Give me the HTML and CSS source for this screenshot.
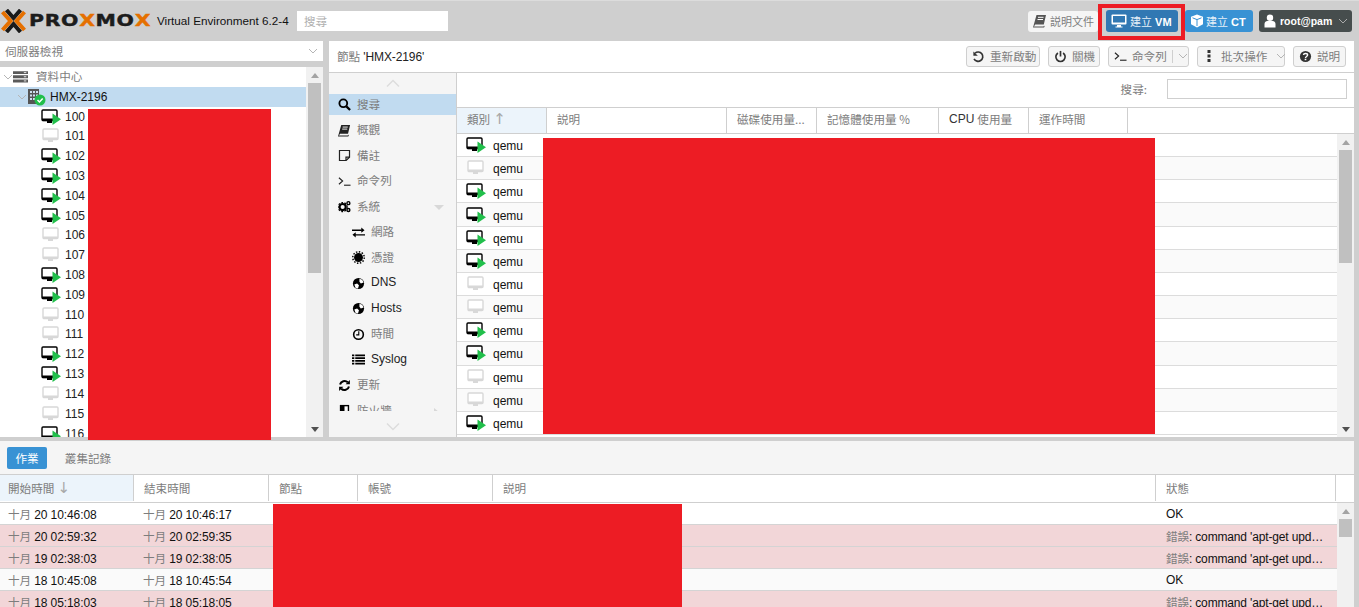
FILE: index.html
```html
<!DOCTYPE html>
<html lang="zh-Hant">
<head>
<meta charset="utf-8">
<title>HMX-2196 - Proxmox Virtual Environment</title>
<link rel="stylesheet" href="styles.css">
</head>
<body>
<svg class="defs" aria-hidden="true">
  <symbol id="vm-on" viewBox="0 0 20 16"><rect x="1" y="1" width="15" height="10.5" rx="1" fill="#fff" stroke="#000" stroke-width="1.4"/><rect x="1" y="9.5" width="15" height="2.6" fill="#000"/><rect x="6" y="12" width="5" height="2" fill="#000"/><path d="M11.500 4.500l8.500 5.750-8.500 5.750z" fill="#21bf4b"/></symbol>
  <symbol id="vm-off" viewBox="0 0 20 16"><rect x="2" y="1" width="15" height="10.5" rx="1" fill="#fff" stroke="#d8d8d8" stroke-width="1.4"/><rect x="2" y="9.5" width="15" height="2.4" fill="#d8d8d8"/><rect x="7" y="12" width="5" height="2" fill="#d8d8d8"/></symbol>
  <symbol id="i-search" viewBox="0 0 14 14"><circle cx="5.7" cy="5.7" r="4.2" fill="none" stroke="#000" stroke-width="2"/><path d="M9 9l4 4" stroke="#000" stroke-width="2.4"/></symbol>
  <symbol id="i-book" viewBox="0 0 14 14"><path d="M3.500 1H13l-2.200 9.500H2.200L1 12.500h9.500l.4-.8.8.2-.6 1.600H0L3.500 1z" fill="currentColor"/><path d="M5 3.300h5.500M4.500 5.500H10" stroke="#fff" stroke-width="1"/></symbol>
  <symbol id="i-note" viewBox="0 0 14 14"><path d="M1.600 1.600h10.800v7.200l-3.600 3.600H1.600z" fill="none" stroke="currentColor" stroke-width="1.300"/><path d="M8.600 12.200V8.800h3.700" fill="none" stroke="currentColor" stroke-width="1.300"/></symbol>
  <symbol id="i-term" viewBox="0 0 14 14"><path d="M1 3l4 3.500L1 10" fill="none" stroke="currentColor" stroke-width="1.200"/><path d="M6.500 11h7" stroke="currentColor" stroke-width="1.200"/></symbol>
  <symbol id="i-cogs" viewBox="0 0 14 14"><circle cx="5" cy="7.600" r="3.300" fill="none" stroke="#000" stroke-width="2.200"/><circle cx="5" cy="7.600" r="4.900" fill="none" stroke="#000" stroke-width="1.200" stroke-dasharray="2 1.500"/><circle cx="11.200" cy="3.400" r="1.600" fill="none" stroke="#000" stroke-width="1.500"/><circle cx="11.200" cy="10.800" r="1.600" fill="none" stroke="#000" stroke-width="1.500"/></symbol>
  <symbol id="i-swap" viewBox="0 0 14 14"><path d="M0 4.500h10.500M3 9.500h11" stroke="#000" stroke-width="1.500"/><path d="M10 1.600l3.500 2.900-3.500 2.900zM4 6.600L.5 9.500 4 12.400z" fill="#000"/></symbol>
  <symbol id="i-cert" viewBox="0 0 14 14"><circle cx="7" cy="7" r="4.800" fill="#000"/><circle cx="7" cy="7" r="6.200" fill="none" stroke="#000" stroke-width="1.600" stroke-dasharray="1.600 1.600"/></symbol>
  <symbol id="i-globe" viewBox="0 0 14 14"><circle cx="7" cy="7" r="6" fill="#000"/><path d="M8 2l3 1 1.500 3-3 1-1.500-2zM2.500 8l3-1 2 2-1 3.500L4 12z" fill="#fff"/></symbol>
  <symbol id="i-clock" viewBox="0 0 14 14"><circle cx="7" cy="7" r="5.200" fill="none" stroke="#000" stroke-width="1.700"/><path d="M7.300 3.600V7.400H4.500" fill="none" stroke="#000" stroke-width="1.200"/></symbol>
  <symbol id="i-list" viewBox="0 0 14 14"><path d="M0 2.500h2.500M0 5.500h2.500M0 8.500h2.500M0 11.500h2.500M3.500 2.500H14M3.500 5.500H14M3.500 8.500H14M3.500 11.500H14" stroke="#000" stroke-width="2"/></symbol>
  <symbol id="i-sync" viewBox="0 0 14 14"><path d="M2.200 6A5 5 0 0 1 10.500 3.500" fill="none" stroke="#000" stroke-width="2.200"/><path d="M11.800 8A5 5 0 0 1 3.500 10.500" fill="none" stroke="#000" stroke-width="2.200"/><path d="M12.800 1v4.600H8.200zM1.200 13V8.400h4.600z" fill="#000"/></symbol>
  <symbol id="i-shield" viewBox="0 0 14 14"><path d="M2 1h10v12H2z" fill="#000"/><path d="M7 2.500h3.500v5H7z" fill="#fff"/></symbol>
  <symbol id="i-desktop" viewBox="0 0 16 14"><rect x=".5" y=".5" width="15" height="10" rx="1" fill="#fff"/><rect x="2" y="2" width="12" height="6.500" fill="#3178b3"/><path d="M6 11h4v1.500h1.500V13.500h-7V12.500H6z" fill="#fff"/></symbol>
  <symbol id="i-cube" viewBox="0 0 14 14"><path d="M7 .5l6 2.300v7.400L7 13.500 1 10.200V2.800z" fill="#fff"/><path d="M2.500 3.800L7 5.600l4.500-1.800M7 5.600v6.400" fill="none" stroke="#3892d4" stroke-width="1"/></symbol>
  <symbol id="i-user" viewBox="0 0 12 14"><circle cx="6" cy="3.800" r="3.200" fill="#fff"/><path d="M.5 13.500V10c0-2 1.500-3 2.800-3h5.400c1.300 0 2.800 1 2.800 3v3.500z" fill="#fff"/></symbol>
  <symbol id="i-undo" viewBox="0 0 14 14"><path d="M3.200 3.500A5 5 0 1 1 2.200 9.500" fill="none" stroke="#333" stroke-width="1.800"/><path d="M1.500 1.500v4.800h4.800z" fill="#333"/></symbol>
  <symbol id="i-power" viewBox="0 0 14 14"><path d="M4.200 3.200a5 5 0 1 0 5.600 0" fill="none" stroke="#333" stroke-width="1.800"/><path d="M7 1v6" stroke="#333" stroke-width="1.800"/></symbol>
  <symbol id="i-dots" viewBox="0 0 6 14"><path d="M1.500 1h3v3h-3zM1.500 5.500h3v3h-3zM1.500 10h3v3h-3z" fill="#333"/></symbol>
  <symbol id="i-help" viewBox="0 0 14 14"><circle cx="7" cy="7" r="6" fill="#333"/><path d="M4.800 5.400C5 3.200 9.300 3.200 9.300 5.500c0 1.500-2.300 1.500-2.300 3" fill="none" stroke="#fff" stroke-width="1.500"/><path d="M6.100 9.400h1.800v1.600H6.100z" fill="#fff"/></symbol>
  <symbol id="i-server" viewBox="0 0 18 14"><path d="M0 0h18v3.500H0zM0 5h18v3.500H0zM0 10h18v3.500H0z" fill="#5a5a5a"/><path d="M13 1.700h3M13 6.700h3M13 11.700h3" stroke="#fff" stroke-width="1"/></symbol>
  <symbol id="i-node" viewBox="0 0 20 18"><path d="M1 1h11v15H1z" fill="#555"/><path d="M3 3h2v2H3zM6 3h2v2H6zM9 3h2v2H9zM3 6.500h2v2H3zM6 6.500h2v2H6zM9 6.500h2v2H9zM3 10h2v2H3zM6 10h2v2H6z" fill="#cfe0ee"/><circle cx="13" cy="12" r="5.500" fill="#21bf4b"/><path d="M10.500 12l2 2 3.200-3.500" fill="none" stroke="#fff" stroke-width="1.500"/></symbol>
  <symbol id="chev" viewBox="0 0 10 6"><path d="M1 1l4 4 4-4" fill="none" stroke="currentColor" stroke-width="1"/></symbol>
</svg>

<div class="app">
  <header class="top">
    <div class="logo">
      <svg class="logo-x" viewBox="0 0 24 24"><path d="M5 1l7 8 7-8M5 23l7-8 7 8" fill="none" stroke="#1a1a1a" stroke-width="4"/><path d="M1 3l8 9-8 9M23 3l-8 9 8 9" fill="none" stroke="#e57000" stroke-width="4"/></svg>
      <span class="logo-text">PRO<b>X</b>MO<b>X</b></span>
    </div>
    <span class="version">Virtual Environment 6.2-4</span>
    <div class="top-search">搜尋</div>
    <div class="spacer"></div>
    <div class="tbtn doc"><svg class="ic14"><use href="#i-book"/></svg><span class="c">説明文件</span></div>
    <div class="vm-wrap"><div class="tbtn blue-d"><svg class="ic-desk"><use href="#i-desktop"/></svg><span><span class="w">建立</span> VM</span></div></div>
    <div class="tbtn blue"><svg class="ic14"><use href="#i-cube"/></svg><span><span class="w">建立</span> CT</span></div>
    <div class="tbtn user"><svg class="ic-user"><use href="#i-user"/></svg><span>root@pam</span><svg class="chev-s"><use href="#chev"/></svg></div>
  </header>

  <div class="mid">
    <aside class="left">
      <div class="viewsel"><span class="c">伺服器檢視</span><svg class="chev-s"><use href="#chev"/></svg></div>
      <div class="tree-box">
        <div class="tree">
          <div class="t-row t-dc"><svg class="chev-s"><use href="#chev"/></svg><svg class="ic-srv"><use href="#i-server"/></svg><span class="c">資料中心</span></div>
          <div class="t-row t-node"><svg class="chev-s"><use href="#chev"/></svg><svg class="ic-node"><use href="#i-node"/></svg><span>HMX-2196</span></div>
          <div class="t-row t-vm"><svg class="ic-vm"><use href="#vm-on"/></svg>100</div>
          <div class="t-row t-vm"><svg class="ic-vm"><use href="#vm-off"/></svg>101</div>
          <div class="t-row t-vm"><svg class="ic-vm"><use href="#vm-on"/></svg>102</div>
          <div class="t-row t-vm"><svg class="ic-vm"><use href="#vm-on"/></svg>103</div>
          <div class="t-row t-vm"><svg class="ic-vm"><use href="#vm-on"/></svg>104</div>
          <div class="t-row t-vm"><svg class="ic-vm"><use href="#vm-on"/></svg>105</div>
          <div class="t-row t-vm"><svg class="ic-vm"><use href="#vm-off"/></svg>106</div>
          <div class="t-row t-vm"><svg class="ic-vm"><use href="#vm-off"/></svg>107</div>
          <div class="t-row t-vm"><svg class="ic-vm"><use href="#vm-on"/></svg>108</div>
          <div class="t-row t-vm"><svg class="ic-vm"><use href="#vm-on"/></svg>109</div>
          <div class="t-row t-vm"><svg class="ic-vm"><use href="#vm-off"/></svg>110</div>
          <div class="t-row t-vm"><svg class="ic-vm"><use href="#vm-off"/></svg>111</div>
          <div class="t-row t-vm"><svg class="ic-vm"><use href="#vm-on"/></svg>112</div>
          <div class="t-row t-vm"><svg class="ic-vm"><use href="#vm-on"/></svg>113</div>
          <div class="t-row t-vm"><svg class="ic-vm"><use href="#vm-off"/></svg>114</div>
          <div class="t-row t-vm"><svg class="ic-vm"><use href="#vm-off"/></svg>115</div>
          <div class="t-row t-vm"><svg class="ic-vm"><use href="#vm-on"/></svg>116</div>
        </div>
        <div class="sbar sbar-tree"><i class="up"></i><i class="thumb"></i><span class="fill"></span><i class="down"></i></div>
      </div>
    </aside>

    <main class="main">
      <div class="title">
        <div class="title-text"><span class="c">節點</span> 'HMX-2196'</div>
        <div class="spacer"></div>
        <div class="btn b-restart"><svg class="ic13"><use href="#i-undo"/></svg><span class="c">重新啟動</span></div>
        <div class="btn b-off"><svg class="ic13"><use href="#i-power"/></svg><span class="c">關機</span></div>
        <div class="btn b-cmd"><svg class="ic13"><use href="#i-term"/></svg><span class="c">命令列</span><em class="sep"></em><svg class="chev-s"><use href="#chev"/></svg></div>
        <div class="btn b-bulk"><svg class="ic-dots"><use href="#i-dots"/></svg><span class="c">批次操作</span><svg class="chev-s"><use href="#chev"/></svg></div>
        <div class="btn b-help"><svg class="ic13"><use href="#i-help"/></svg><span class="c">説明</span></div>
      </div>
      <div class="content">
        <nav class="nav">
          <div class="nav-scroll"><svg class="chev-l"><use href="#chev"/></svg></div>
          <div class="n-item sel"><svg class="ic13"><use href="#i-search"/></svg><span class="c">搜尋</span></div>
          <div class="n-item"><svg class="ic13"><use href="#i-book"/></svg><span class="c">概觀</span></div>
          <div class="n-item"><svg class="ic13"><use href="#i-note"/></svg><span class="c">備註</span></div>
          <div class="n-item"><svg class="ic13"><use href="#i-term"/></svg><span class="c">命令列</span></div>
          <div class="n-item"><svg class="ic13"><use href="#i-cogs"/></svg><span class="c">系統</span><i class="tri-d"></i></div>
          <div class="n-item sub"><svg class="ic13"><use href="#i-swap"/></svg><span class="c">網路</span></div>
          <div class="n-item sub"><svg class="ic13"><use href="#i-cert"/></svg><span class="c">憑證</span></div>
          <div class="n-item sub"><svg class="ic13"><use href="#i-globe"/></svg><span>DNS</span></div>
          <div class="n-item sub"><svg class="ic13"><use href="#i-globe"/></svg><span>Hosts</span></div>
          <div class="n-item sub"><svg class="ic13"><use href="#i-clock"/></svg><span class="c">時間</span></div>
          <div class="n-item sub"><svg class="ic13"><use href="#i-list"/></svg><span>Syslog</span></div>
          <div class="n-item"><svg class="ic13"><use href="#i-sync"/></svg><span class="c">更新</span></div>
          <div class="n-item"><svg class="ic13"><use href="#i-shield"/></svg><span class="c">防火牆</span><i class="tri-r"></i></div>
          <div class="nav-scroll nav-scroll-b"><svg class="chev-l"><use href="#chev"/></svg></div>
        </nav>
        <section class="grid">
          <div class="g-search"><span class="c">搜尋:</span><div class="g-input"></div></div>
          <div class="g-head">
            <div class="hc sorted w90"><span class="c">類別</span><span class="arrow">↑</span></div>
            <div class="hc w180"><span class="c">説明</span></div>
            <div class="hc w90"><span class="c">磁碟使用量...</span></div>
            <div class="hc w122"><span class="c">記憶體使用量 %</span></div>
            <div class="hc w90"><span>CPU </span><span class="c">使用量</span></div>
            <div class="hc w99"><span class="c">運作時間</span></div>
          </div>
          <div class="g-body">
            <div class="g-rows">
              <div class="g-row"><svg class="ic-vm"><use href="#vm-on"/></svg><span>qemu</span></div>
              <div class="g-row alt"><svg class="ic-vm"><use href="#vm-off"/></svg><span>qemu</span></div>
              <div class="g-row"><svg class="ic-vm"><use href="#vm-on"/></svg><span>qemu</span></div>
              <div class="g-row alt"><svg class="ic-vm"><use href="#vm-on"/></svg><span>qemu</span></div>
              <div class="g-row"><svg class="ic-vm"><use href="#vm-on"/></svg><span>qemu</span></div>
              <div class="g-row alt"><svg class="ic-vm"><use href="#vm-on"/></svg><span>qemu</span></div>
              <div class="g-row"><svg class="ic-vm"><use href="#vm-off"/></svg><span>qemu</span></div>
              <div class="g-row alt"><svg class="ic-vm"><use href="#vm-off"/></svg><span>qemu</span></div>
              <div class="g-row"><svg class="ic-vm"><use href="#vm-on"/></svg><span>qemu</span></div>
              <div class="g-row alt"><svg class="ic-vm"><use href="#vm-on"/></svg><span>qemu</span></div>
              <div class="g-row"><svg class="ic-vm"><use href="#vm-off"/></svg><span>qemu</span></div>
              <div class="g-row alt"><svg class="ic-vm"><use href="#vm-off"/></svg><span>qemu</span></div>
              <div class="g-row"><svg class="ic-vm"><use href="#vm-on"/></svg><span>qemu</span></div>
            </div>
            <div class="sbar sbar-grid"><i class="up"></i><i class="thumb"></i><span class="fill"></span><i class="down"></i></div>
          </div>
        </section>
      </div>
    </main>
  </div>

  <section class="bottom">
    <div class="tabs">
      <div class="tab on">作業</div>
      <div class="tab c">叢集記錄</div>
    </div>
    <div class="log-head">
      <div class="lh sorted"><span class="c">開始時間</span><span class="arrow">↓</span></div>
      <div class="lh"><span class="c">結束時間</span></div>
      <div class="lh"><span class="c">節點</span></div>
      <div class="lh"><span class="c">帳號</span></div>
      <div class="lh"><span class="c">説明</span></div>
      <div class="lh"><span class="c">狀態</span></div>
      <div class="lh last"></div>
    </div>
    <div class="log-body">
      <div class="log-rows">
        <div class="l-row"><div><span class="c">十月</span> 20 10:46:08</div><div><span class="c">十月</span> 20 10:46:17</div><div></div><div></div><div></div><div>OK</div></div>
        <div class="l-row err"><div><span class="c">十月</span> 20 02:59:32</div><div><span class="c">十月</span> 20 02:59:35</div><div></div><div></div><div></div><div class="st"><span class="c">錯誤</span>: command 'apt-get update' failed</div></div>
        <div class="l-row err"><div><span class="c">十月</span> 19 02:38:03</div><div><span class="c">十月</span> 19 02:38:05</div><div></div><div></div><div></div><div class="st"><span class="c">錯誤</span>: command 'apt-get update' failed</div></div>
        <div class="l-row alt"><div><span class="c">十月</span> 18 10:45:08</div><div><span class="c">十月</span> 18 10:45:54</div><div></div><div></div><div></div><div>OK</div></div>
        <div class="l-row err"><div><span class="c">十月</span> 18 05:18:03</div><div><span class="c">十月</span> 18 05:18:05</div><div></div><div></div><div></div><div class="st"><span class="c">錯誤</span>: command 'apt-get update' failed</div></div>
      </div>
      <div class="sbar sbar-log"><i class="up"></i><i class="thumb"></i></div>
    </div>
  </section>

  <div class="red red-tree"></div>
  <div class="red red-grid"></div>
  <div class="red red-log"></div>
  <div class="red-box"></div>
</div>
</body>
</html>
```
FILE: styles.css
```css
* { box-sizing: border-box; }
html, body { margin: 0; height: 607px; overflow: hidden; }
body { background: #cfcfcf; font: 12px/16px "Liberation Sans", "Noto Sans CJK TC", sans-serif; color: #111; }
.defs { display: none; }
svg { display: block; flex: none; }
.c { color: #7d7d7d; font: 400 11.600px/16px "Noto Sans CJK TC", sans-serif; }
.spacer { flex: 1; }

.app { position: relative; height: 607px; padding-right: 5px; display: flex; flex-direction: column; border-top: 1px solid #dcdcdc; }

/* header */
.top { height: 40px; flex: none; display: flex; align-items: center; margin-right: -5px; padding-right: 7px; }
.logo { display: flex; align-items: center; width: 157px; padding-left: 1px; }
.logo-x { width: 25px; height: 24px; }
.logo-text { display: inline-block; font: bold 15.500px/20px "DejaVu Sans", sans-serif; letter-spacing: .5px; margin-left: 3px; color: #1c1c1c; transform: scaleX(1.320); transform-origin: left center; -webkit-text-stroke: .4px #1c1c1c; white-space: nowrap; }
.logo-text b { color: #e57000; -webkit-text-stroke: .4px #e57000; }
.version { width: 140px; font-size: 11.700px; color: #111; white-space: nowrap; }
.top-search { width: 151px; height: 20px; background: #fff; color: #b0b0b0; padding-left: 7px; font: 11.600px/20px "Noto Sans CJK TC", sans-serif; }
.tbtn { height: 22px; display: flex; align-items: center; gap: 6px; border-radius: 3px; white-space: nowrap; }
.doc { width: 70px; height: 21px; background: #f5f5f5; padding-left: 5px; gap: 3px; margin-right: 8px; font-size: 11px; }
.doc .c { font-size: 11px; }
.doc svg { color: #555; }
.vm-wrap { margin-right: 7px; }
.blue-d { width: 72px; background: #3178b3; color: #fff; padding-left: 5px; gap: 3px; font: bold 11px/16px "Liberation Sans", "Noto Sans CJK TC", sans-serif; }
.blue { width: 68px; background: #3892d4; color: #fff; padding-left: 5px; margin-right: 6px; gap: 2px; font: bold 11px/16px "Liberation Sans", "Noto Sans CJK TC", sans-serif; }
.w { font: 400 11px/16px "Noto Sans CJK TC", sans-serif; color: #e6f0f8; }
.user { width: 93px; background: #464d4d; color: #fff; padding-left: 5px; gap: 4px; font: bold 10.500px/16px "Liberation Sans", sans-serif; }
.user .chev-s { color: #aaa; margin-left: 2px; }
.ic14 { width: 14px; height: 14px; }
.ic-desk { width: 16px; height: 14px; }
.ic-user { width: 12px; height: 14px; }
.chev-s { width: 10px; height: 6px; color: #b5b5b5; }
.chev-l { width: 16px; height: 9px; color: #ddd; }

/* middle */
.mid { height: 396px; flex: none; display: flex; gap: 6px; }
.left { width: 323px; flex: none; display: flex; flex-direction: column; gap: 6px; }
.viewsel { height: 20px; flex: none; background: #fff; display: flex; align-items: center; justify-content: space-between; padding: 0 5px; }
.tree-box { flex: 1; display: flex; min-height: 0; background: #fff; }
.tree { flex: 1; min-width: 0; overflow: hidden; }
.t-row { height: 19.820px; display: flex; align-items: center; white-space: nowrap; }
.t-dc { padding-left: 3px; }
.t-dc .c { margin-top: -2px; }
.t-dc .ic-srv { width: 15px; height: 12px; margin: 0 8px 0 0; }
.t-node { padding-left: 17px; background: #c1dbf0; }
.t-node .ic-node { width: 20px; height: 18px; margin: 0 3px 0 0; }
.t-node span { color: #111; }
.t-vm { padding-left: 41px; gap: 4px; color: #222; }
.ic-vm { width: 20px; height: 16px; }

.sbar { width: 17px; flex: none; background: #f1f1f1; display: flex; flex-direction: column; align-items: center; }
.sbar .up { display: block; width: 0; height: 0; margin: 6px 0 5px; border: 4px solid transparent; border-top: 0; border-bottom: 5px solid #a3a3a3; }
.sbar .down { display: block; width: 0; height: 0; margin: 5px 0 5px; border: 4px solid transparent; border-bottom: 0; border-top: 5px solid #505050; }
.sbar .thumb { display: block; width: 13px; background: #c0c0c0; }
.sbar .fill { flex: 1; }
.sbar-tree .thumb { height: 190px; }
.sbar-grid .thumb { height: 113px; }
.sbar-log .thumb { height: 18px; }

/* main */
.main { flex: 1; min-width: 0; display: flex; flex-direction: column; background: #fff; }
.title { height: 32px; flex: none; display: flex; align-items: center; gap: 8px; padding: 0 8px 1px 8px; border-bottom: 1px solid #cfcfcf; }
.title-text { color: #222; margin-top: 1px; letter-spacing: -.1px; }
.btn { height: 21px; display: flex; align-items: center; gap: 5px; background: #f5f5f5; border: 1px solid #cfcfcf; border-radius: 3px; padding-left: 5px; white-space: nowrap; }
.b-restart { width: 74px; }
.b-off { width: 52px; }
.b-cmd { width: 81px; }
.b-bulk { width: 88px; padding-left: 8px; gap: 9px; }
.b-help { width: 53px; }
.ic13 { width: 13px; height: 13px; color: #222; }
.ic-dots { width: 6px; height: 14px; }
.sep { width: 1px; height: 13px; background: #cfcfcf; }
.content { flex: 1; min-height: 0; display: flex; }

.nav { position: relative; width: 128px; flex: none; overflow: hidden; background: #f5f5f5; border-right: 1px solid #cfcfcf; }
.nav-scroll { height: 21px; display: flex; align-items: center; justify-content: center; transform: scaleY(-1); background: #f5f5f5; }
.nav-scroll-b { position: absolute; left: 0; right: 0; bottom: 0; height: 26px; padding-top: 4px; transform: none; }
.n-item { height: 21px; margin-bottom: 4.500px; display: flex; align-items: center; gap: 6px; padding-left: 9px; position: relative; color: #222; }
.n-item span { margin-top: -2px; }
.n-item.sel { background: #c1dbf0; }
.n-item.sub { padding-left: 23px; }
.tri-d { position: absolute; left: 105px; top: 9px; width: 0; height: 0; border: 5px solid transparent; border-bottom: 0; border-top: 5px solid #d8d8d8; }
.tri-r { position: absolute; left: 105px; top: 8px; width: 0; height: 0; border: 4px solid transparent; border-right: 0; border-left: 5px solid #d8d8d8; }

.grid { flex: 1; min-width: 0; display: flex; flex-direction: column; }
.g-search { height: 34px; flex: none; display: flex; align-items: center; justify-content: flex-end; gap: 20px; padding: 0 7px 2px 0; }
.g-input { width: 180px; height: 20px; border: 1px solid #cfcfcf; }
.g-head { height: 27px; flex: none; display: flex; border-top: 1px solid #cfcfcf; border-bottom: 1px solid #cfcfcf; }
.hc { display: flex; align-items: center; padding: 0 0 3px 10px; border-right: 1px solid #cfcfcf; color: #333; gap: 3px; white-space: nowrap; overflow: hidden; }
.sorted { background: #ecf4fb; }
.arrow { color: #a8a8a8; font: 15px/16px "DejaVu Sans", sans-serif; }
.w90 { width: 90px; }
.w180 { width: 180px; }
.w122 { width: 122px; }
.w99 { width: 99px; }
.g-body { flex: 1; min-height: 0; display: flex; }
.g-rows { flex: 1; min-width: 0; overflow: hidden; }
.g-row { height: 23.170px; display: flex; align-items: center; gap: 7px; padding-left: 9px; border-bottom: 1px solid #dcdcdc; color: #111; }
.g-row span { margin-top: 2px; }
.g-row.alt { background: #fafafa; }

/* bottom */
.bottom { flex: 1; min-height: 0; margin-top: 4px; background: #fff; display: flex; flex-direction: column; }
.tabs { height: 34px; flex: none; background: #f5f5f5; border-bottom: 1px solid #cfcfcf; display: flex; align-items: flex-start; padding: 6px 7px 0; gap: 11px; }
.tab { height: 22px; width: 40px; text-align: center; border-radius: 2px; font: 11.600px/22px "Noto Sans CJK TC", sans-serif; }
.tab.on { background: #3892d4; color: #fff; }
.tab.c { width: 60px; line-height: 22px; }
.log-head, .l-row { display: grid; grid-template-columns: 134px 135px 89px 135px 663px 181px; }
.log-head { height: 28px; flex: none; grid-template-columns: 134px 135px 89px 135px 663px 180px 18px; border-bottom: 1px solid #cfcfcf; }
.lh { display: flex; align-items: center; gap: 3px; padding: 0 0 1px 8px; border-right: 1px solid #cfcfcf; margin-bottom: 1px; }
.lh:nth-child(n+2) { padding-left: 10px; }
.lh.last { border-right: 0; }
.log-body { flex: 1; min-height: 0; display: flex; }
.log-rows { flex: 1; min-width: 0; overflow: hidden; }
.l-row { height: 22px; border-bottom: 1px solid #d4d4d4; align-items: center; }
.l-row > div { padding: 1px 0 0 10px; white-space: nowrap; overflow: hidden; color: #111; letter-spacing: -.1px; }
.l-row > div:first-child { padding-left: 8px; }
.l-row > div:nth-child(2) { padding-left: 9px; }
.l-row .st { padding-right: 10px; letter-spacing: -.15px; text-overflow: ellipsis; }
.l-row.err { background: #f2d6d8; }
.l-row.alt { background: #fafafa; }

/* overlays: redaction blocks and the annotation box lie over the page */
.red { position: absolute; background: #ed1c24; }
.red-tree { left: 88px; top: 108px; width: 183px; height: 331px; }
.red-grid { left: 543px; top: 137px; width: 612px; height: 296px; }
.red-log { left: 273px; top: 503px; width: 409px; height: 103px; }
.red-box { position: absolute; left: 1098px; top: 3px; width: 87px; height: 36px; border: 4px solid #ed1c24; }
```
